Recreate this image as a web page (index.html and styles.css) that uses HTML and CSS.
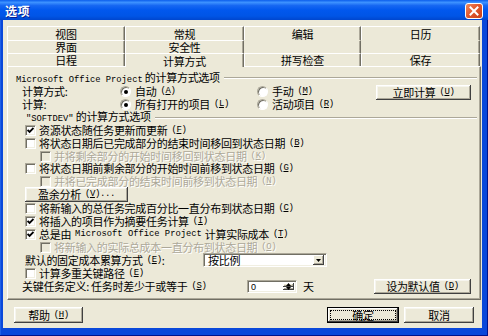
FILE: index.html
```html
<!DOCTYPE html>
<html lang="zh-CN">
<head>
<meta charset="utf-8">
<title>选项</title>
<link rel="stylesheet" href="styles.css">
</head>
<body>
<div class="window">
  <div class="titlebar">
    <span class="title">选项</span>
    <span class="close"><svg width="10" height="10" viewBox="0 0 10 10"><path d="M1.5 1.5 L8.5 8.5 M8.5 1.5 L1.5 8.5" stroke="#fff" stroke-width="2" stroke-linecap="square"/></svg></span>
  </div>
  <div class="client">
    <div class="tabs">
      <div class="tab">视图</div>
      <div class="tab">常规</div>
      <div class="tab">编辑</div>
      <div class="tab">日历</div>
      <div class="tab">界面</div>
      <div class="tab">安全性</div>
      <div class="tab empty"></div>
      <div class="tab empty"></div>
      <div class="tab">日程</div>
      <div class="tab active">计算方式</div>
      <div class="tab">拼写检查</div>
      <div class="tab">保存</div>
    </div>
    <div class="panel">
      <div class="group g1"><span><span class="lat">Microsoft Office Project</span> 的计算方式选项</span><span class="etch"></span></div>
      <div class="row opt-row">
        <span class="opt-label">计算方式:</span>
        <span class="radio-item w1"><span class="radio on"></span>自动<span class="mn">(<u>A</u>)</span></span>
        <span class="radio-item"><span class="radio"></span>手动<span class="mn">(<u>M</u>)</span></span>
        <button class="btn btn-now">立即计算<span class="mn">(<u>U</u>)</span></button>
      </div>
      <div class="row opt-row">
        <span class="opt-label">计算:</span>
        <span class="radio-item w1"><span class="radio on"></span>所有打开的项目<span class="mn">(<u>L</u>)</span></span>
        <span class="radio-item"><span class="radio"></span>活动项目<span class="mn">(<u>R</u>)</span></span>
      </div>
      <div class="group g2"><span><span class="lat">"SOFTDEV"</span> 的计算方式选项</span><span class="etch"></span></div>
      <div class="row cb-row"><span class="cb"><svg width="7" height="7" viewBox="0 0 7 7"><path d="M0.6 3 L2.6 5 L6.5 1" fill="none" stroke="#000" stroke-width="1.8"/></svg></span>资源状态随任务更新而更新<span class="mn">(<u>F</u>)</span></div>
      <div class="row cb-row"><span class="cb"></span>将状态日期后已完成部分的结束时间移回到状态日期<span class="mn">(<u>B</u>)</span></div>
      <div class="row cb-row sub disabled"><span class="cb"></span>并将剩余部分的开始时间移回到状态日期<span class="mn">(<u>K</u>)</span></div>
      <div class="row cb-row"><span class="cb"></span>将状态日期前剩余部分的开始时间前移到状态日期<span class="mn">(<u>G</u>)</span></div>
      <div class="row cb-row sub disabled"><span class="cb"></span>并将已完成部分的结束时间前移到状态日期<span class="mn">(<u>N</u>)</span></div>
      <div class="row btn-row"><button class="btn btn-ev">盈余分析<span class="mn">(<u>V</u>)...</span></button></div>
      <div class="row cb-row"><span class="cb"></span>将新输入的总任务完成百分比一直分布到状态日期<span class="mn">(<u>C</u>)</span></div>
      <div class="row cb-row"><span class="cb"><svg width="7" height="7" viewBox="0 0 7 7"><path d="M0.6 3 L2.6 5 L6.5 1" fill="none" stroke="#000" stroke-width="1.8"/></svg></span>将插入的项目作为摘要任务计算<span class="mn">(<u>I</u>)</span></div>
      <div class="row cb-row"><span class="cb"><svg width="7" height="7" viewBox="0 0 7 7"><path d="M0.6 3 L2.6 5 L6.5 1" fill="none" stroke="#000" stroke-width="1.8"/></svg></span>总是由<span class="lat sp">Microsoft Office Project</span>计算实际成本<span class="mn">(<u>T</u>)</span></div>
      <div class="row cb-row sub disabled"><span class="cb"></span>将新输入的实际总成本一直分布到状态日期<span class="mn">(<u>O</u>)</span></div>
      <div class="row sel-row">
        <span class="sel-label">默认的固定成本累算方式<span class="mn">(<u>E</u>)</span>:</span>
        <span class="select"><span class="val">按比例</span><span class="arrow"><svg width="5" height="3" viewBox="0 0 5 3"><path d="M0 0 H5 L2.5 3 Z" fill="#000"/></svg></span></span>
      </div>
      <div class="row cb-row short"><span class="cb"></span>计算多重关键路径<span class="mn">(<u>E</u>)</span></div>
      <div class="row crit-row">
        <span class="crit-label">关键任务定义: 任务时差少于或等于<span class="mn">(<u>S</u>)</span></span>
        <span class="spin"><span class="val">0</span><span class="spin-btns"><span class="sb"><svg width="5" height="3" viewBox="0 0 5 3"><path d="M0 3 H5 L2.5 0 Z" fill="#000"/></svg></span><span class="sb"><svg width="5" height="3" viewBox="0 0 5 3"><path d="M0 0 H5 L2.5 3 Z" fill="#000"/></svg></span></span></span>
        <span class="unit">天</span>
        <button class="btn btn-def">设为默认值<span class="mn">(<u>D</u>)</span></button>
      </div>
    </div>
    <div class="footer">
      <button class="btn btn-help">帮助<span class="mn">(<u>H</u>)</span></button>
      <button class="btn btn-ok"><span class="focus">确定</span></button>
      <button class="btn btn-cancel">取消</button>
    </div>
  </div>
</div>
</body>
</html>
```

FILE: styles.css
```css
* { box-sizing: border-box; }
html, body { margin: 0; padding: 0; }
body {
  width: 488px;
  height: 336px;
  overflow: hidden;
  background: #fff;
  font-family: "Noto Sans CJK SC", "Liberation Sans", sans-serif;
  font-size: 11px;
  letter-spacing: -0.3px;
  color: #000;
}
.window {
  width: 488px;
  height: 336px;
  display: flex;
  flex-direction: column;
  background: #0A48DA;
  box-shadow: inset -1px 0 #00138C, inset 0 -1px #00138C, inset 1px 0 #1E5FE6;
}
.titlebar {
  height: 20px;
  flex: none;
  display: flex;
  align-items: center;
  justify-content: space-between;
  padding: 0 5px 0 5px;
  background: linear-gradient(#0B5EEC 0%, #3D92FF 12%, #1667F2 28%, #0158EE 50%, #0055E6 80%, #0046CE 100%);
}
.title {
  color: #fff;
  font-weight: bold;
  font-size: 12px;
  letter-spacing: 0.5px;
  text-shadow: 1px 1px #0A1E8C;
}
.close {
  width: 18px;
  height: 16px;
  display: flex;
  align-items: center;
  justify-content: center;
  border: 1px solid #fff;
  border-radius: 3px;
  background: linear-gradient(135deg, #F08A62 0%, #E2592E 45%, #C8401A 100%);
  margin-top: 1px;
}
.client {
  flex: 1;
  margin: 0 6px 8px 3px;
  background: #ECE9D8;
  display: flex;
  flex-direction: column;
}
.tabs {
  display: grid;
  grid-template-columns: 118px 119px 117px 119px;
  grid-template-rows: 14px 13px 13px;
  margin: 6px 0 0 4px;
}
.tab {
  display: flex;
  align-items: center;
  justify-content: center;
  border-top: 1px solid #fff;
  border-left: 1px solid #fff;
  border-right: 1px solid #716F64;
  box-shadow: inset -1px 0 #ACA899;
  line-height: 1;
  padding-top: 1px;
}
.tab.empty { border-top-color: transparent; border-left-color: transparent; }
.tab.active {
  position: relative;
  z-index: 1;
  margin-bottom: -1px;
  background: #ECE9D8;
}
.panel {
  width: 474px;
  height: 234px;
  margin-left: 4px;
  border-top: 1px solid #fff;
  border-left: 1px solid #fff;
  border-right: 1px solid #716F64;
  border-bottom: 1px solid #716F64;
  box-shadow: inset -1px -1px #ACA899;
  padding-top: 4px;
}
.row {
  display: flex;
  align-items: center;
  height: 13px;
  white-space: nowrap;
  line-height: 1;
}
.lat {
  font-family: "Liberation Mono", monospace;
  font-size: 8.8px;
  letter-spacing: 0;
}
.lat.sp { margin: 0 3px 0 4px; }
.mn {
  font-family: "Liberation Mono", monospace;
  font-size: 9px;
  letter-spacing: -0.4px;
  margin-left: 4px;
}
.group {
  display: flex;
  align-items: center;
  height: 13px;
  white-space: nowrap;
  line-height: 1;
  padding-right: 3px;
}
.group.g1 { height: 14px; padding-left: 8px; }
.group.g2 { padding-left: 18px; }
.etch {
  flex: 1;
  height: 2px;
  margin-left: 4px;
  border-top: 1px solid #ACA899;
  border-bottom: 1px solid #fff;
}
.opt-row { padding-left: 14px; }
.opt-label { width: 98px; }
.radio-item { display: flex; align-items: center; }
.radio-item.w1 { width: 137px; }
.radio {
  width: 11px;
  height: 11px;
  border-radius: 50%;
  background: #fff;
  border: 1px solid;
  border-color: #ACA899 #fff #fff #ACA899;
  box-shadow: inset 1px 1px #716F64;
  margin-right: 4px;
  display: flex;
  align-items: center;
  justify-content: center;
  flex: none;
}
.radio.on::after {
  content: "";
  width: 4px;
  height: 4px;
  border-radius: 50%;
  background: #000;
}
.btn {
  font-family: inherit;
  font-size: 11px;
  letter-spacing: -0.3px;
  color: #000;
  background: #ECE9D8;
  border: none;
  padding: 0;
  display: flex;
  align-items: center;
  justify-content: center;
  line-height: 1;
  box-shadow: inset -1px -1px #404040, inset 1px 1px #fff, inset -2px -2px #ACA899, inset 2px 2px #F6F5EE;
}
.btn-now { width: 95px; height: 15px; margin-left: auto; margin-right: 9px; margin-top: 1px; }
.cb-row { padding-left: 17px; }
.cb-row.sub { padding-left: 32px; height: 12px; }
.cb-row.short { height: 12px; }
.cb {
  width: 11px;
  height: 11px;
  flex: none;
  background: #fff;
  border: 1px solid;
  border-color: #ACA899 #fff #fff #ACA899;
  box-shadow: inset 1px 1px #716F64, inset -1px -1px #F1EFE2;
  margin-right: 3px;
  display: flex;
  align-items: center;
  justify-content: center;
}
.disabled { color: #ACA899; text-shadow: 1px 1px #fff; }
.disabled .cb { background: #ECE9D8; }
.btn-row { height: 15px; padding-left: 17px; }
.btn-ev { width: 103px; height: 15px; }
.sel-row { height: 14px; padding-left: 17px; }
.sel-label { width: 178px; display: flex; align-items: center; }
.select {
  width: 124px;
  height: 14px;
  background: #fff;
  border: 1px solid;
  border-color: #ACA899 #fff #fff #ACA899;
  box-shadow: inset 1px 1px #716F64, inset -1px -1px #F1EFE2;
  display: flex;
  align-items: center;
  padding: 2px;
}
.select .val { flex: 1; padding-left: 2px; }
.arrow, .sb {
  background: #ECE9D8;
  display: flex;
  align-items: center;
  justify-content: center;
  box-shadow: inset -1px -1px #404040, inset 1px 1px #fff, inset -2px -2px #ACA899;
}
.arrow { width: 11px; height: 10px; }
.crit-row { height: 15px; padding-left: 14px; }
.crit-label { width: 225px; display: flex; align-items: center; }
.spin {
  width: 50px;
  height: 13px;
  background: #fff;
  border: 1px solid;
  border-color: #ACA899 #fff #fff #ACA899;
  box-shadow: inset 1px 1px #716F64, inset -1px -1px #F1EFE2;
  display: flex;
  padding: 2px 2px 2px 2px;
}
.spin .val { flex: 1; font-family: "Liberation Sans", sans-serif; font-size: 9px; line-height: 9px; padding-left: 1px; }
.spin-btns { width: 11px; display: flex; flex-direction: column; }
.sb { flex: 1; }
.unit { margin-left: 6px; }
.btn-def { width: 97px; height: 15px; margin-left: auto; margin-right: 9px; }
.footer {
  display: flex;
  align-items: flex-start;
  padding: 7px 8px 0 11px;
}
.btn-help { width: 69px; height: 16px; }
.btn-ok {
  width: 72px;
  height: 16px;
  margin-left: auto;
  border: 1px solid #000;
  box-shadow: inset -1px -1px #404040, inset 1px 1px #fff, inset -2px -2px #ACA899;
  padding: 2px;
}
.btn-ok .focus {
  flex: 1;
  align-self: stretch;
  display: flex;
  align-items: center;
  justify-content: center;
  border: 1px dotted #000;
}
.btn-cancel { width: 70px; height: 16px; margin-left: 5px; }
```
